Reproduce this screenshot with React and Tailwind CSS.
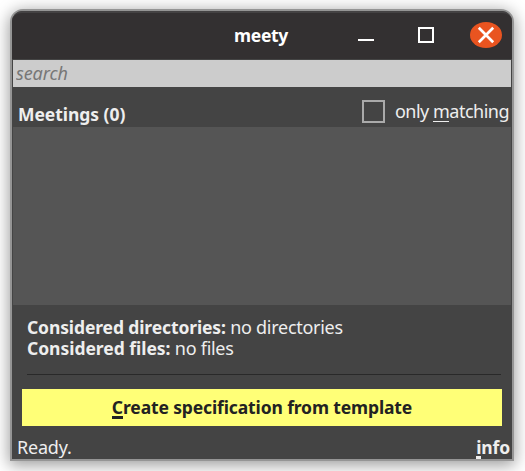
function TitleBar() {
  return (
    <header className="flex h-[48px] shrink-0 items-center rounded-t-[10px] border-t-2 border-[#444243] bg-[#333031] text-white">
      <div className="w-[222px]" />
      <h1 className="mb-[2px] w-[54px] whitespace-nowrap text-[17.5px] leading-6 font-bold tracking-[-0.3px]">meety</h1>
      <svg className="ml-[66px] h-[46px] w-[158px]" viewBox="0 0 158 46" aria-hidden="true">
        <path d="M4 27H20" stroke="#fff" strokeWidth="2" />
        <rect x="65" y="15" width="14" height="14" fill="none" stroke="#fff" strokeWidth="2" />
        <ellipse cx="132" cy="22" rx="16" ry="13" fill="#e95420" />
        <path d="M124.8 14.8L139.2 29.2M139.2 14.8L124.8 29.2" stroke="#fff" strokeWidth="2.7" />
      </svg>
    </header>
  );
}

export default function App() {
  return (
    <div className="h-[471px] w-[525px] overflow-hidden bg-white pt-[9px] pl-[10px] font-['Noto_Sans','Open_Sans',sans-serif] text-[#eee]">
      <main className="flex h-[452px] w-[504px] flex-col rounded-t-[13px] border-2 border-[#959595] bg-[#444] shadow-[0_3px_16px_1px_rgba(0,0,0,0.4)]">
        <TitleBar />
        <div className="mx-px mt-px flex h-[27px] shrink-0 items-center bg-[#ccc] pl-[3px]">
          <input className="w-full text-[18px] leading-[27px] tracking-[-0.1px] italic outline-none placeholder:text-[#777]" placeholder="search" aria-label="search" />
        </div>
        <div className="flex h-[40px] shrink-0 items-start justify-between pr-[3px] pl-[6px]">
          <h2 className="mt-[15px] text-[17.5px] leading-6 font-bold tracking-[-0.05px]">Meetings (0)</h2>
          <label className="mt-[12px] flex items-center text-[18px] leading-6 tracking-[-0.5px]">
            <span className="mt-px mr-[10px] size-[23px] border-2 border-[#aaa]" />
            <span>only <span className="inline-block h-[23px] border-b border-[#eee]">m</span>atching</span>
          </label>
        </div>
        <div className="mx-px h-[178px] shrink-0 bg-[#555]" />
        <section className="h-[69px] shrink-0 pt-[12px] pl-[15px] text-[18px] leading-[21px] tracking-[-0.28px]">
          <p><b className="text-[17.5px] tracking-[-0.12px]">Considered directories:</b> no directories</p>
          <p><b className="text-[17.5px] tracking-[-0.03px]">Considered files:</b> no files</p>
        </section>
        <hr className="mr-[11px] ml-[15px] border-[#292929]" />
        <button className="mx-[10px] mt-[14px] flex h-[37px] shrink-0 items-center justify-center bg-[#ffff77] pb-[2px] text-[17.5px] leading-6 font-bold tracking-[-0.13px] text-[#222]">
          <span><span className="inline-block h-[24px] border-b-3 border-[#222]">C</span>reate specification from template</span>
        </button>
        <footer className="flex h-[33px] items-start justify-between pt-[9px] pr-[2px] pl-[5px] text-[18px] leading-6 tracking-[-0.2px]">
          <span>Ready.</span>
          <b className="text-[17.5px] tracking-[-0.15px]"><span className="inline-block h-[24px] border-b-3 border-[#eee]">i</span>nfo</b>
        </footer>
      </main>
    </div>
  );
}
